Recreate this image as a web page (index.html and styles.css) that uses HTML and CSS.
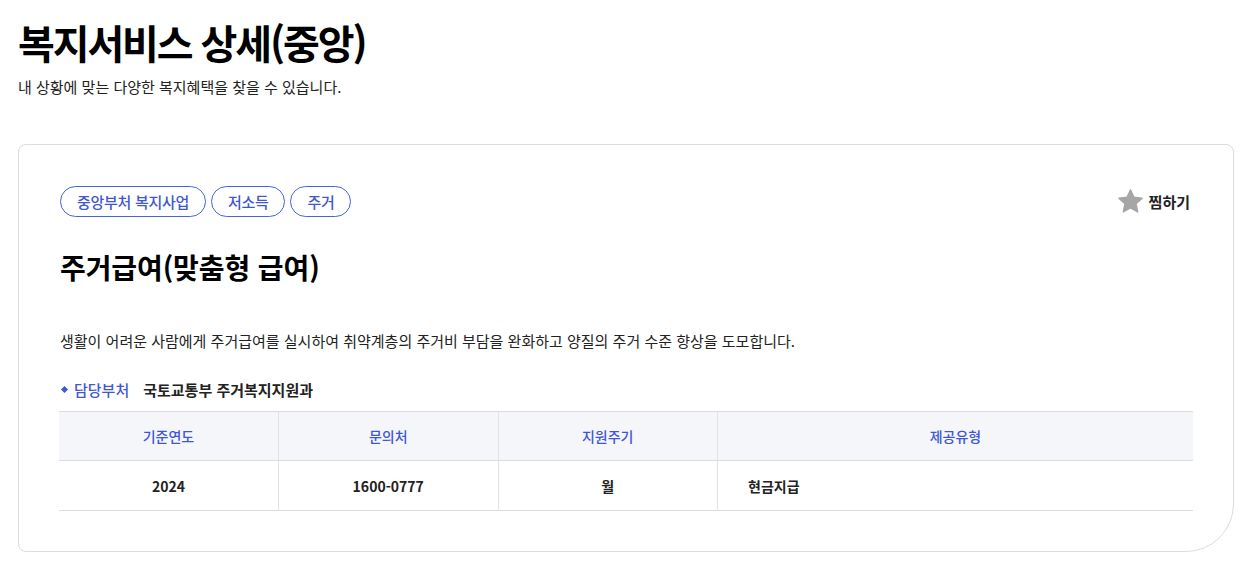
FILE: index.html
```html
<!DOCTYPE html>
<html lang="ko">
<head>
<meta charset="utf-8">
<title>복지서비스 상세(중앙)</title>
<link rel="stylesheet" href="styles.css">
</head>
<body>
<div class="page">
  <header class="page-head">
    <h1 class="page-title">복지서비스 상세(중앙)</h1>
    <p class="page-desc">내 상황에 맞는 다양한 복지혜택을 찾을 수 있습니다.</p>
  </header>
  <section class="card">
    <div class="card-top">
      <ul class="tags">
        <li class="tag">중앙부처 복지사업</li>
        <li class="tag">저소득</li>
        <li class="tag">주거</li>
      </ul>
      <button class="fav" type="button">
        <svg class="fav-icon" viewBox="0 0 24 24" width="27" height="27" aria-hidden="true">
          <path d="M12 1.6l3.1 6.6 7.2.9-5.3 5 1.4 7.2L12 17.8l-6.4 3.5 1.4-7.2-5.3-5 7.2-.9z" fill="#a6a6a6" stroke="#a6a6a6" stroke-width="1.2" stroke-linejoin="round"/>
        </svg>
        <span>찜하기</span>
      </button>
    </div>
    <h2 class="svc-title">주거급여(맞춤형 급여)</h2>
    <p class="svc-desc">생활이 어려운 사람에게 주거급여를 실시하여 취약계층의 주거비 부담을 완화하고 양질의 주거 수준 향상을 도모합니다.</p>
    <div class="dept">
      <span class="dept-label">담당부처</span>
      <span class="dept-name">국토교통부 주거복지지원과</span>
    </div>
    <table class="info">
      <thead>
        <tr>
          <th class="c1">기준연도</th>
          <th class="c2">문의처</th>
          <th class="c3">지원주기</th>
          <th class="c4">제공유형</th>
        </tr>
      </thead>
      <tbody>
        <tr>
          <td>2024</td>
          <td>1600-0777</td>
          <td>월</td>
          <td class="left">현금지급</td>
        </tr>
      </tbody>
    </table>
  </section>
</div>
</body>
</html>
```
FILE: styles.css
```css
* { box-sizing: border-box; }
html, body { margin: 0; padding: 0; background: #fff; }
body {
  font-family: "Noto Sans CJK KR", "Noto Sans", sans-serif;
  color: #111;
}
.page { padding: 14px 15px 0 18px; }
.page-title {
  margin: 0;
  font-size: 40px;
  font-weight: 700;
  line-height: 56px;
  letter-spacing: -2.1px;
  color: #000;
}
.page-desc {
  margin: 6px 0 0;
  font-size: 15px;
  line-height: 22px;
  color: #222;
}
.card {
  margin-top: 46px;
  border: 1px solid #dcdcdc;
  border-radius: 8px 8px 48px 8px;
  padding: 41px 40px 40px 40px;
}
.card-top {
  display: flex;
  justify-content: space-between;
  align-items: center;
}
.tags {
  display: flex;
  gap: 5px;
  margin: 0 0 0 1px;
  padding: 0;
  list-style: none;
}
.tag {
  height: 31px;
  padding: 0 16px;
  border: 1px solid #4663e0;
  border-radius: 16px;
  color: #3f57cf;
  font-size: 15px;
  line-height: 29px;
  font-weight: 500;
  letter-spacing: -0.3px;
}
.fav {
  display: flex;
  align-items: center;
  gap: 5px;
  margin-right: 3px;
  border: 0;
  background: none;
  padding: 0;
  font-family: inherit;
  font-size: 15px;
  font-weight: 700;
  color: #222;
  cursor: pointer;
}
.svc-title {
  margin: 30px 0 0 1px;
  font-size: 28px;
  line-height: 40px;
  font-weight: 700;
  letter-spacing: -0.1px;
  color: #000;
}
.svc-desc {
  margin: 42px 0 0 1px;
  font-size: 15px;
  line-height: 24px;
  color: #222;
}
.dept {
  display: flex;
  align-items: center;
  margin: 26px 0 0 1px;
  font-size: 15px;
  line-height: 22px;
}
.dept-label {
  position: relative;
  padding-left: 14px;
  color: #3f57cf;
  font-weight: 500;
  margin-right: 14px;
}
.dept-label::before {
  content: "";
  position: absolute;
  left: 2px;
  top: 8px;
  width: 5px;
  height: 5px;
  background: #3f57cf;
  transform: rotate(45deg);
}
.dept-name { font-weight: 700; color: #222; }
.info {
  width: 100%;
  margin-top: 10px;
  border-collapse: collapse;
  font-size: 14px;
  table-layout: fixed;
}
.info th, .info td {
  border-top: 1px solid #dcdcdc;
  border-bottom: 1px solid #dcdcdc;
  border-left: 1px solid #e2e2e2;
  text-align: center;
}
.info th:first-child, .info td:first-child { border-left: 0; }
.info th {
  height: 49px;
  background: #f5f6fa;
  color: #4156d6;
  font-weight: 500;
}
.info td {
  height: 50px;
  font-weight: 700;
  color: #222;
}
.info td.left { text-align: left; padding-left: 30px; }
.c1, .c2, .c3 { width: 219.5px; }
```
